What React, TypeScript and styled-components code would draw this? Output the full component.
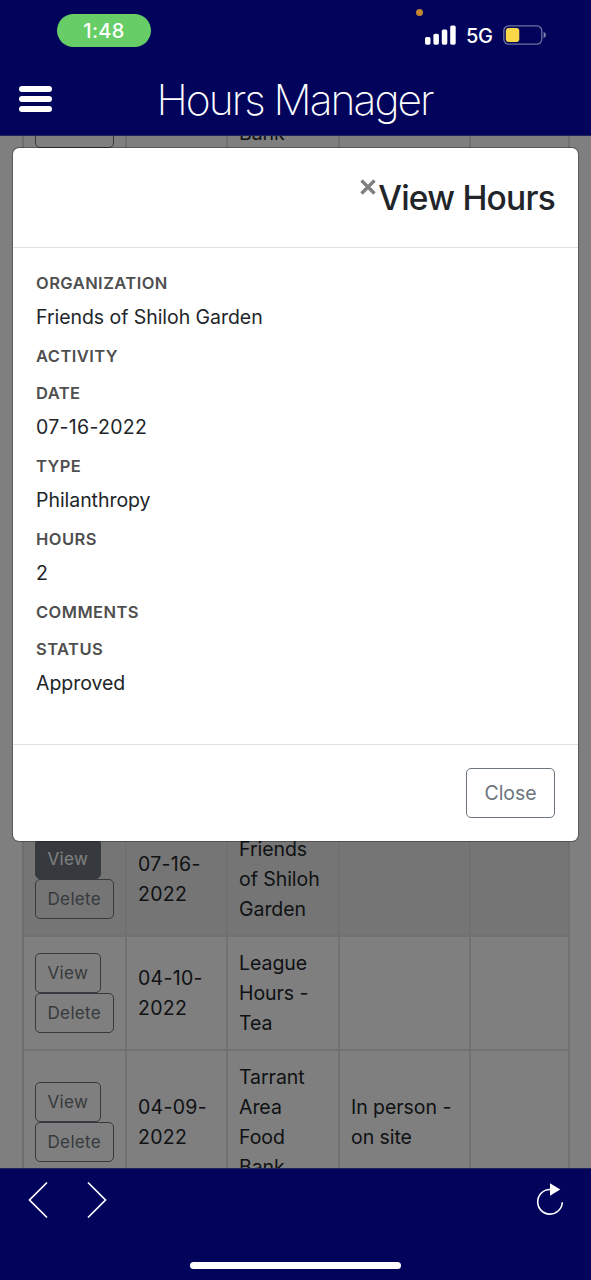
import React from "react";
import styled, { createGlobalStyle } from "styled-components";

const GlobalStyle = createGlobalStyle`
  * { box-sizing: border-box; }
  body { margin: 0; background: #02045c; }
`;

const Screen = styled.div`
  display: flex;
  flex-direction: column;
  width: 591px;
  height: 1280px;
  overflow: hidden;
  font-family: Inter, "Liberation Sans", sans-serif;
  font-size: 19.5px;
  line-height: 30px;
  letter-spacing: -0.05px;
  color: #212529;
`;

const TopBar = styled.header`
  position: relative;
  flex: none;
  height: 136px;
  background: #02045c;
  border-bottom: 1px solid #20225c;
  color: #fff;
`;

const StatusBar = styled.div`
  display: flex;
  align-items: flex-start;
  justify-content: space-between;
  height: 66px;
  padding: 14px 45px 0 57px;
`;

const TimePill = styled.div`
  width: 94px;
  height: 33px;
  border-radius: 17px;
  background: #67ce67;
  text-align: center;
  font-size: 20px;
  font-weight: 500;
  line-height: 34px;
  letter-spacing: 0.3px;
`;

const Signals = styled.div`
  display: flex;
  align-items: center;
  height: 29px;
  margin-top: 6px;
`;

const Network = styled.span`
  width: 27px;
  margin: 2px 10px 0 10px;
  font-size: 20px;
  font-weight: 500;
  letter-spacing: -0.3px;
`;

const PrivacyDot = styled.i`
  position: absolute;
  left: 416px;
  top: 9px;
  width: 7px;
  height: 7px;
  border-radius: 50%;
  background: #c38433;
`;

const TitleRow = styled.div`
  display: grid;
  grid-template-columns: 137.5px 1fr 140px;
  align-items: center;
  height: 66px;
  padding: 0 0 0 19px;
`;

const MenuButton = styled.div`
  display: flex;
  flex-direction: column;
  gap: 4px;
  width: 33px;
`;

const MenuBar = styled.span`
  height: 6px;
  border-radius: 3px;
  background: #fff;
`;

const Title = styled.h1`
  margin: 2px 0 0;
  font-size: 42.5px;
  font-weight: 200;
  line-height: 50px;
  letter-spacing: -2px;
  white-space: nowrap;
`;

const Content = styled.main`
  position: relative;
  flex: none;
  height: 1032px;
  overflow: hidden;
  background: #fff;
`;

const Table = styled.div`
  width: 548px;
  margin: -119px 0 0 22px;
  border-left: 2px solid #dadde0;
`;

const Row = styled.div<{ $striped?: boolean; $height: number }>`
  display: grid;
  grid-template-columns: 103px 101px 112px 131px 99px;
  height: ${(p) => p.$height}px;
  background: ${(p) => (p.$striped ? "#ebebeb" : "#fff")};
`;

const Cell = styled.div<{ $numeric?: boolean }>`
  display: flex;
  flex-direction: column;
  justify-content: center;
  align-items: flex-start;
  padding: 0 10px 0 11px;
  border-right: 2px solid #dee2e6;
  border-bottom: 2px solid #dee2e6;
  letter-spacing: ${(p) => (p.$numeric ? "0.3px" : "inherit")};
`;

const SmallButton = styled.button<{ $active?: boolean }>`
  height: 40px;
  min-width: 65px;
  padding: 0 11.5px;
  border: 1.5px solid #6c757d;
  border-radius: 5px;
  background: ${(p) => (p.$active ? "#6c757d" : "transparent")};
  color: ${(p) => (p.$active ? "#fff" : "#6c757d")};
  font: inherit;
  font-size: 17px;
  letter-spacing: 0.35px;
`;

const EmptyButton = styled(SmallButton)`
  flex: none;
  width: 79px;
`;

const Backdrop = styled.div`
  position: absolute;
  inset: 0;
  background: rgba(0, 0, 0, 0.5);
`;

const Dialog = styled.section`
  position: absolute;
  left: 12px;
  top: 11px;
  display: flex;
  flex-direction: column;
  width: 567px;
  height: 695px;
  border: 1px solid rgba(0, 0, 0, 0.3);
  border-radius: 7px;
  background: #fff;
  background-clip: padding-box;
`;

const DialogHeader = styled.div`
  display: flex;
  justify-content: flex-end;
  height: 100px;
  padding: 28px 23px 0 0;
  border-bottom: 1px solid #dee2e6;
`;

const DialogClose = styled.svg`
  width: 16px;
  height: 16px;
  margin: 3px 2px 0 0;
`;

const DialogTitle = styled.h2`
  margin: 0;
  font-size: 33.5px;
  font-weight: 450;
  line-height: 44px;
  letter-spacing: -0.75px;
`;

const Fields = styled.dl`
  display: flex;
  flex-direction: column;
  flex: 1;
  gap: 12.4px;
  margin: 0;
  padding: 23px;
`;

const Label = styled.dt`
  color: #4f4f4f;
  font-size: 16.5px;
  font-weight: 600;
  line-height: 25px;
  letter-spacing: 0.45px;
`;

const Value = styled.dd<{ $numeric?: boolean }>`
  margin: 5.5px 0 0;
  letter-spacing: ${(p) => (p.$numeric ? "0.3px" : "inherit")};
`;

const DialogFooter = styled.div`
  display: flex;
  justify-content: flex-end;
  align-items: flex-start;
  height: 97px;
  padding: 23px 23px 0 0;
  border-top: 1px solid #dee2e6;
`;

const CloseButton = styled.button`
  width: 89px;
  height: 50px;
  padding: 0;
  border: 1.5px solid #6c757d;
  border-radius: 5px;
  background: #fff;
  color: #6c757d;
  font: inherit;
  letter-spacing: -0.05px;
`;

const BottomBar = styled.footer`
  flex: none;
  display: flex;
  flex-direction: column;
  justify-content: space-between;
  align-items: center;
  height: 112px;
  padding-bottom: 11px;
  background: #02045c;
  border-top: 1px solid #20225c;
`;

const NavRow = styled.div`
  display: flex;
  align-items: center;
  gap: 39px;
  width: 100%;
  height: 61px;
  padding: 0 27.5px 0 28px;
`;

const Reload = styled.svg`
  margin: -2px 0 0 auto;
`;

const HomeIndicator = styled.div`
  width: 211px;
  height: 7px;
  border-radius: 4px;
  background: #fff;
`;

type Entry = { date: string[]; name: string[]; type: string[]; active?: boolean; striped?: boolean };

const entries: Entry[] = [
  { date: ["07-16-", "2022"], name: ["Friends", "of Shiloh", "Garden"], type: [], active: true, striped: true },
  { date: ["04-10-", "2022"], name: ["League", "Hours -", "Tea"], type: [] },
  { date: ["04-09-", "2022"], name: ["Tarrant", "Area", "Food", "Bank"], type: ["In person -", "on site"] },
];

const fields: [string, string?][] = [
  ["ORGANIZATION", "Friends of Shiloh Garden"],
  ["ACTIVITY"],
  ["DATE", "07-16-2022"],
  ["TYPE", "Philanthropy"],
  ["HOURS", "2"],
  ["COMMENTS"],
  ["STATUS", "Approved"],
];

const Line = styled.span`
  height: 30px;
  white-space: nowrap;
`;

const Lines = ({ items, numeric }: { items: string[]; numeric?: boolean }) => (
  <Cell $numeric={numeric}>
    {items.map((item, i) => (
      <Line key={i}>{item}</Line>
    ))}
  </Cell>
);

const EntryRow = ({ entry }: { entry: Entry }) => (
  <Row $striped={entry.striped} $height={entry.name.length > 3 ? 144 : 114}>
    <Cell>
      <SmallButton $active={entry.active}>View</SmallButton>
      <SmallButton>Delete</SmallButton>
    </Cell>
    <Lines items={entry.date} numeric />
    <Lines items={entry.name} />
    <Lines items={entry.type} />
    <Cell />
  </Row>
);

export default function App() {
  return (
    <Screen>
      <GlobalStyle />
      <TopBar>
        <PrivacyDot />
        <StatusBar>
          <TimePill>1:48</TimePill>
          <Signals>
            <svg width="31" height="20" viewBox="0 0 31 20" fill="#fff">
              <rect x="0" y="12" width="5.5" height="7.7" rx="1.6" />
              <rect x="8.4" y="8.7" width="5.5" height="11" rx="1.6" />
              <rect x="16.8" y="4.5" width="5.5" height="15.2" rx="1.6" />
              <rect x="25.2" y="0.4" width="5.5" height="19.3" rx="1.6" />
            </svg>
            <Network>5G</Network>
            <svg width="43" height="20" viewBox="0 0 43 20">
              <rect x="0.8" y="0.8" width="38" height="18.4" rx="5" fill="none" stroke="#70719f" strokeWidth="1.3" />
              <rect x="2.8" y="3" width="13.5" height="14" rx="3" fill="#f9d749" />
              <path d="M40.6 6.7 Q43 8 43 10 Q43 12 40.6 13.3Z" fill="#8182aa" />
            </svg>
          </Signals>
        </StatusBar>
        <TitleRow>
          <MenuButton>
            <MenuBar />
            <MenuBar />
            <MenuBar />
          </MenuButton>
          <Title>Hours Manager</Title>
        </TitleRow>
      </TopBar>

      <Content>
        <Table>
          <Row $height={143}>
            <Cell>
              <EmptyButton />
              <EmptyButton />
              <EmptyButton />
            </Cell>
            <Cell />
            <Lines items={["", "", "", "Bank"]} />
            <Cell />
            <Cell />
          </Row>
          <Row $height={663} />
          {entries.map((entry) => (
            <EntryRow key={entry.date[0]} entry={entry} />
          ))}
        </Table>
        <Backdrop />
        <Dialog>
          <DialogHeader>
            <DialogClose viewBox="0 0 16 16">
              <path d="M1.5 1.5 14.5 14.5M14.5 1.5 1.5 14.5" stroke="#808080" strokeWidth="3.4" />
            </DialogClose>
            <DialogTitle>View Hours</DialogTitle>
          </DialogHeader>
          <Fields>
            {fields.map(([label, value]) => (
              <div key={label}>
                <Label>{label}</Label>
                {value && <Value $numeric={/^\d/.test(value)}>{value}</Value>}
              </div>
            ))}
          </Fields>
          <DialogFooter>
            <CloseButton>Close</CloseButton>
          </DialogFooter>
        </Dialog>
      </Content>

      <BottomBar>
        <NavRow>
          <svg width="20" height="38" viewBox="0 0 20 38" fill="none" stroke="#fff" strokeWidth="1.7">
            <path d="M19 1.5 1.5 19 19 36.5" />
          </svg>
          <svg width="20" height="38" viewBox="0 0 20 38" fill="none" stroke="#fff" strokeWidth="1.7">
            <path d="M1 1.5 18.5 19 1 36.5" />
          </svg>
          <Reload width="28" height="34" viewBox="0 0 28 34">
            <path d="M14.5 7.5 H14 A12.3 12.3 0 1 0 26.3 20.3" fill="none" stroke="#fff" strokeWidth="1.6" />
            <path d="M14 1.3 24.3 7.5 14 13.7Z" fill="#fff" />
          </Reload>
        </NavRow>
        <HomeIndicator />
      </BottomBar>
    </Screen>
  );
}
